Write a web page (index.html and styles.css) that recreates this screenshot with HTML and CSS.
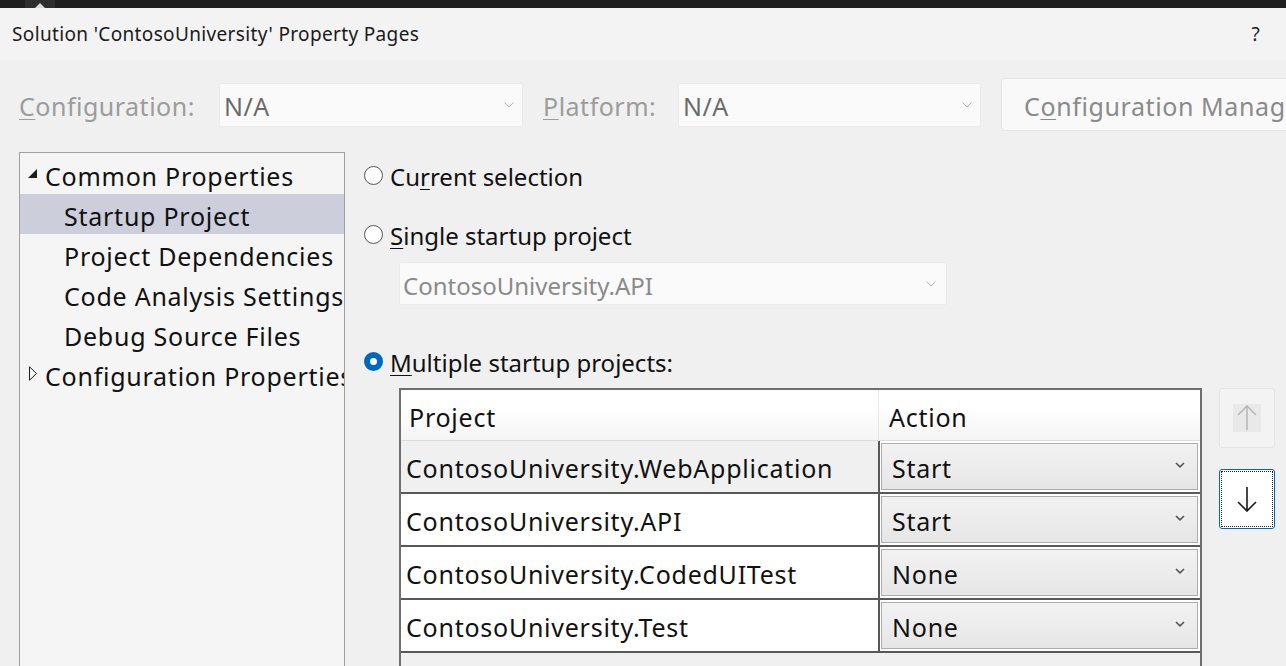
FILE: index.html
```html
<!DOCTYPE html>
<html>
<head>
<meta charset="utf-8">
<link rel="stylesheet" href="styles.css">
</head>
<body>
<div class="topbar"><div class="tab"><span class="tab-caret"></span></div></div>
<div class="titlebar">
  <span class="title">Solution 'ContosoUniversity' Property Pages</span>
  <span class="help">?</span>
</div>
<div class="toolbar">
  <span class="lbl lbl-config"><u>C</u>onfiguration:</span>
  <div class="dd dd-config"><span>N/A</span><svg class="chev" width="10" height="6" viewBox="0 0 10 6"><path d="M0.5 0.5 L5 5 L9.5 0.5" fill="none" stroke="#b4b4b4" stroke-width="1"/></svg></div>
  <span class="lbl lbl-plat"><u>P</u>latform:</span>
  <div class="dd dd-plat"><span>N/A</span><svg class="chev" width="10" height="6" viewBox="0 0 10 6"><path d="M0.5 0.5 L5 5 L9.5 0.5" fill="none" stroke="#b4b4b4" stroke-width="1"/></svg></div>
  <div class="cfgbtn">C<u>o</u>nfiguration Manager...</div>
</div>
<div class="main">
  <div class="tree">
    <div class="node"><svg class="tri" width="10" height="10" viewBox="0 0 10 10"><path d="M9 0 L9 9 L0 9 Z" fill="#1e1e1e"/></svg><span>Common Properties</span></div>
    <div class="node child sel"><span>Startup Project</span></div>
    <div class="node child"><span>Project Dependencies</span></div>
    <div class="node child"><span>Code Analysis Settings</span></div>
    <div class="node child"><span>Debug Source Files</span></div>
    <div class="node"><svg class="tri" width="10" height="16" viewBox="0 0 10 16"><path d="M1.5 0.8 L1.5 14.2 L8.5 7.5 Z" fill="none" stroke="#1e1e1e" stroke-width="1"/></svg><span>Configuration Properties</span></div>
  </div>
  <div class="pane">
    <div class="radio-row r1"><span class="radio"></span><span>Cu<u>r</u>rent selection</span></div>
    <div class="radio-row r2"><span class="radio"></span><span><u>S</u>ingle startup project</span></div>
    <div class="dd dd-single"><span>ContosoUniversity.API</span><svg class="chev" width="10" height="6" viewBox="0 0 10 6"><path d="M0.5 0.5 L5 5 L9.5 0.5" fill="none" stroke="#b4b4b4" stroke-width="1"/></svg></div>
    <div class="radio-row r3"><span class="radio on"></span><span><u>M</u>ultiple startup projects:</span></div>
    <div class="gridarea">
      <div class="grid">
        <div class="ghead">
          <div class="c1">Project</div>
          <div class="c2">Action</div>
        </div>
        <div class="grow first">
          <div class="c1">ContosoUniversity.WebApplication</div>
          <div class="c2"><div class="combo"><span>Start</span><svg width="10" height="6" viewBox="0 0 10 6"><path d="M1 1 L5 4.8 L9 1" fill="none" stroke="#555" stroke-width="1.6"/></svg></div></div>
        </div>
        <div class="grow">
          <div class="c1">ContosoUniversity.API</div>
          <div class="c2"><div class="combo"><span>Start</span><svg width="10" height="6" viewBox="0 0 10 6"><path d="M1 1 L5 4.8 L9 1" fill="none" stroke="#555" stroke-width="1.6"/></svg></div></div>
        </div>
        <div class="grow">
          <div class="c1">ContosoUniversity.CodedUITest</div>
          <div class="c2"><div class="combo"><span>None</span><svg width="10" height="6" viewBox="0 0 10 6"><path d="M1 1 L5 4.8 L9 1" fill="none" stroke="#555" stroke-width="1.6"/></svg></div></div>
        </div>
        <div class="grow">
          <div class="c1">ContosoUniversity.Test</div>
          <div class="c2"><div class="combo"><span>None</span><svg width="10" height="6" viewBox="0 0 10 6"><path d="M1 1 L5 4.8 L9 1" fill="none" stroke="#555" stroke-width="1.6"/></svg></div></div>
        </div>
      </div>
      <div class="moves">
        <div class="mv up"><div class="mv-inner"><svg width="20" height="26" viewBox="0 0 20 26"><path d="M10 1 L10 25 M1 10 L10 1 L19 10" fill="none" stroke="#b8b8b8" stroke-width="1.6"/></svg></div></div>
        <div class="mv down"><div class="mv-focus"><svg width="20" height="26" viewBox="0 0 20 26"><path d="M10 1 L10 25 M1 16 L10 25 L19 16" fill="none" stroke="#1a1a1a" stroke-width="1.6"/></svg></div></div>
      </div>
    </div>
  </div>
</div>
</body>
</html>
```
FILE: styles.css
```css
html, body {
  margin: 0;
  padding: 0;
  width: 1286px;
  height: 666px;
  overflow: hidden;
  background: #f0f0f0;
  font-family: "Noto Sans", "Open Sans", sans-serif;
  color: #111;
}
u { text-decoration-thickness: 1px; text-underline-offset: 3px; }

.topbar {
  height: 8px;
  background: #1f1f1f;
  display: flex;
}
.tab {
  margin-left: 25px;
  width: 30px;
  height: 8px;
  background: #2e2e2e;
  display: flex;
  justify-content: center;
  align-items: flex-end;
}
.tab-caret {
  width: 0; height: 0;
  border-left: 5px solid transparent;
  border-right: 5px solid transparent;
  border-bottom: 5px solid #d8d8d8;
}

.titlebar {
  height: 52px;
  background: #f3f3f3;
  display: flex;
  align-items: center;
  justify-content: space-between;
  padding: 0 26px 0 12px;
  box-sizing: border-box;
  font-size: 19px;
  letter-spacing: 0.35px;
  color: #1a1a1a;
}

.toolbar {
  margin-top: 18px;
  height: 53px;
  display: flex;
  align-items: center;
  padding-left: 19px;
  white-space: nowrap;
  overflow: hidden;
}
.toolbar > * { flex-shrink: 0; }
.lbl {
  font-size: 25px;
  letter-spacing: 0.5px;
  color: #9c9c9c;
  padding-top: 3px;
}
.lbl-config { width: 200px; }
.lbl-plat { margin-left: 20px; width: 135px; }
.dd {
  height: 44px;
  box-sizing: border-box;
  background: #fafafa;
  border: 1px solid #ebebeb;
  border-radius: 2px;
  display: flex;
  align-items: center;
  justify-content: space-between;
  padding: 3px 8px 0 4px;
  font-size: 25px;
  letter-spacing: 0.5px;
  color: #6a6a6a;
}
.dd .chev { margin-top: -3px; }
.dd-config { width: 304px; }
.dd-plat { width: 303px; }
.cfgbtn {
  margin-left: 20px;
  height: 53px;
  width: 420px;
  box-sizing: border-box;
  background: #f9f9f9;
  border: 1px solid #e4e4e4;
  border-radius: 4px;
  font-size: 25px;
  letter-spacing: 0.6px;
  color: #8a8a8a;
  display: flex;
  align-items: center;
  padding: 3px 0 0 22px;
  white-space: nowrap;
}

.main {
  margin-top: 21px;
  display: flex;
  padding-left: 19px;
}
.tree {
  width: 326px;
  height: 520px;
  box-sizing: border-box;
  border: 1px solid #a0a0a0;
  background: #f5f5f5;
  padding-top: 1px;
  overflow: hidden;
  flex-shrink: 0;
}
.node {
  height: 40px;
  box-sizing: border-box;
  display: flex;
  align-items: center;
  font-size: 25px;
  letter-spacing: 0.75px;
  white-space: nowrap;
  padding: 4px 0 0 8px;
  color: #111;
}
.node .tri { width: 10px; margin-right: 7px; margin-top: -4px; flex-shrink: 0; }
.node.child { padding-left: 44px; }
.node.sel { background: #cccedb; }

.pane {
  margin-left: 18px;
  flex: 1;
  display: flex;
  flex-direction: column;
}
.radio-row {
  height: 40px;
  box-sizing: border-box;
  display: flex;
  align-items: center;
  font-size: 24px;
  color: #111;
  white-space: nowrap;
}
.radio-row > span:last-child { padding-top: 2px; }
.r1 { margin-top: 3px; }
.r2 { margin-top: 19px; }
.r3 { margin-top: 36px; }
.radio {
  width: 19px;
  height: 19px;
  box-sizing: border-box;
  border: 1px solid #555;
  border-radius: 50%;
  background: #fff;
  margin-right: 7px;
  margin-left: 1px;
  flex-shrink: 0;
}
.radio.on {
  border: 6px solid #0067c0;
  background: #fff;
}
.dd-single {
  margin-top: 8px;
  margin-left: 36px;
  width: 548px;
  height: 43px;
  color: #8a8a8a;
  padding-left: 3px;
  padding-right: 10px;
  font-size: 24px;
  letter-spacing: 0;
}

.gridarea {
  margin-top: 7px;
  margin-left: 36px;
  display: flex;
}
.grid {
  width: 803px;
  height: 300px;
  box-sizing: border-box;
  border: 2px solid #6e6e6e;
  border-bottom: none;
  background: #f0f0f0;
  flex-shrink: 0;
}
.ghead {
  height: 50px;
  display: flex;
  background: linear-gradient(#ffffff 0%, #ffffff 35%, #f4f4f4 100%);
  border-bottom: 1px solid #dcdcdc;
  font-size: 25px;
  letter-spacing: 0.75px;
  color: #111;
}
.ghead .c1 {
  width: 478px;
  border-right: 1px solid #e6e6e6;
  padding: 4px 0 0 8px;
  display: flex;
  align-items: center;
  box-sizing: border-box;
}
.ghead .c2 {
  flex: 1;
  padding: 4px 0 0 10px;
  display: flex;
  align-items: center;
}
.grow {
  height: 53px;
  box-sizing: border-box;
  display: flex;
  border-bottom: 2px solid #585858;
  font-size: 25px;
  letter-spacing: 0.75px;
  background: #fff;
}
.grow .c1 {
  width: 479px;
  box-sizing: border-box;
  border-right: 2px solid #585858;
  padding: 3px 0 0 5px;
  display: flex;
  align-items: center;
  white-space: nowrap;
}
.grow.first .c1 { background: #f0f0f0; }
.grow .c2 {
  flex: 1;
  padding: 2px 2px 2px 1px;
  box-sizing: border-box;
  display: flex;
}
.combo {
  flex: 1;
  box-sizing: border-box;
  border: 1px solid #adadad;
  background: linear-gradient(#f2f2f2, #e6e6e6);
  display: flex;
  align-items: center;
  justify-content: space-between;
  padding: 3px 12px 0 10px;
}
.combo svg { margin-top: -6px; }

.moves {
  margin-left: 17px;
  display: flex;
  flex-direction: column;
  gap: 21px;
}
.mv {
  width: 56px;
  height: 60px;
  box-sizing: border-box;
  border-radius: 3px;
  display: flex;
  align-items: center;
  justify-content: center;
}
.mv.up {
  background: #f3f3f3;
  border: 1px solid #e5e5e5;
}
.mv-inner {
  width: 28px;
  height: 28px;
  background: #e9e9e9;
  display: flex;
  align-items: center;
  justify-content: center;
}
.mv.down {
  background: #fff;
  border: 1px solid #0067c0;
  padding: 1px;
}
.mv-focus {
  width: 100%;
  height: 100%;
  box-sizing: border-box;
  border: 1px dotted #222;
  display: flex;
  align-items: center;
  justify-content: center;
}
```
